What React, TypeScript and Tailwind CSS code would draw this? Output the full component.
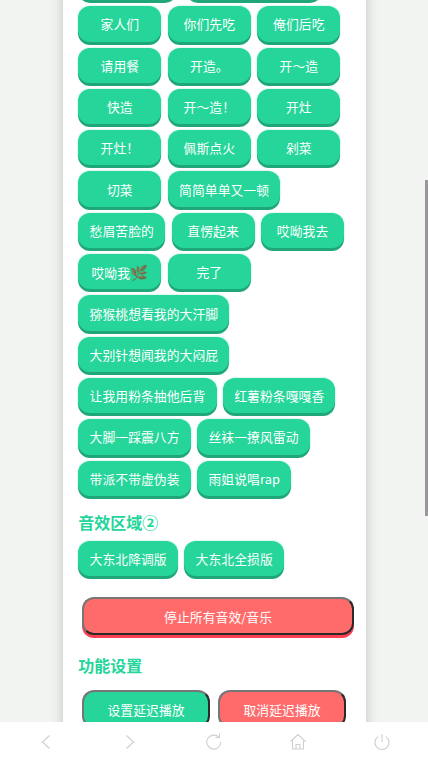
import type { ReactNode } from "react";

const font = { fontFamily: '"Noto Sans CJK SC", "Noto Sans", sans-serif' };

const soundsBefore = [
  "家人们", "你们先吃", "俺们后吃", "请用餐", "开造。", "开～造", "快造", "开～造！", "开灶", "开灶！", "佩斯点火", "剁菜",
  "切菜", "简简单单又一顿", "愁眉苦脸的", "直愣起来", "哎呦我去",
];

const soundsAfter = [
  "完了", "猕猴桃想看我的大汗脚", "大别针想闻我的大闷屁",
  "让我用粉条抽他后背", "红薯粉条嘎嘎香", "大脚一踩震八方", "丝袜一撩风雷动", "带派不带虚伪装", "雨姐说唱rap",
];

const SoundButton = ({ children }: { children: ReactNode }) => (
  <button className="h-[35.3px] min-w-[83px] mb-[6px] mx-[3.25px] px-[11.2px] rounded-[12px] bg-[#25d59a] text-white text-[12.8px] tracking-[0.07px] leading-[35px] whitespace-nowrap shadow-[0_3px_0_#1fa67b,0_0_2px_rgba(37,213,154,0.5)]">
    {children}
  </button>
);

const OutsetButton = ({ label, color, className }: { label: string; color: string; className: string }) => (
  <button
    className={`h-[38px] rounded-[12px] border-2 border-t-[#767676] border-l-[#767676] border-r-[#2a2a2a] border-b-[#2a2a2a] text-white text-[12.8px] tracking-[0.07px] ${color} ${className}`}
  >
    {label}
  </button>
);

export default function App() {
  return (
    <div style={font} className="relative h-[762px] w-[428px] overflow-hidden bg-[#f2f4f1]">
      <div className="ml-[63px] w-[303px] h-[780px] -mt-[35px] bg-white shadow-[0_0_12px_rgba(0,0,0,0.2)] pl-[12.1px] pr-[6px]">
        <div className="flex flex-wrap content-start">
          <div className="h-[35.3px] w-[99px] mb-[6px] ml-[3.25px] rounded-[12px] bg-[#25d59a] shadow-[0_3px_0_#1fa67b]" />
          <div className="h-[35.3px] w-[136.5px] mb-[6px] ml-[8.5px] mr-[20px] rounded-[12px] bg-[#25d59a] shadow-[0_3px_0_#1fa67b]" />
          {soundsBefore.map((s) => (
            <SoundButton key={s}>{s}</SoundButton>
          ))}
          <SoundButton>
            哎呦我<span className="text-[14.5px] [filter:sepia(0.7)_saturate(0.8)_brightness(0.8)]">🌿</span>
          </SoundButton>
          {soundsAfter.map((s) => (
            <SoundButton key={s}>{s}</SoundButton>
          ))}
        </div>

        <h2 className="mt-[8px] ml-[3.25px] text-[16px] leading-[24px] font-bold text-[#25d59a]">音效区域②</h2>
        <div className="mt-[7px] flex">
          <SoundButton>大东北降调版</SoundButton>
          <SoundButton>大东北全损版</SoundButton>
        </div>

        <OutsetButton
          label="停止所有音效/音乐"
          color="bg-[#ff6b6b] shadow-[0_3px_0_#ff4050]"
          className="mt-[15px] ml-[7px] block w-[272px]"
        />

        <h2 className="mt-[18px] ml-[3.25px] text-[16px] leading-[24px] font-bold text-[#25d59a]">功能设置</h2>
        <div className="mt-[13px] ml-[7px] flex gap-[8px]">
          <OutsetButton label="设置延迟播放" color="bg-[#25d59a]" className="w-[128px]" />
          <OutsetButton label="取消延迟播放" color="bg-[#ff6b6b]" className="w-[128px]" />
        </div>
      </div>

      {/* scrollbar */}
      <div className="absolute right-0 top-[180px] h-[336px] w-[3px] bg-[#9a979b]" />

      {/* bottom browser bar */}
      <div className="absolute inset-x-0 bottom-0 h-[40px] bg-white text-[#cfcfcf]">
        <svg className="absolute left-[38px] top-[10px]" width="16" height="20" viewBox="0 0 16 20" fill="none" stroke="currentColor" strokeWidth="1.2">
          <path d="M11.5 3.5 L4.5 10 L11.5 16.5" />
        </svg>
        <svg className="absolute left-[122px] top-[10px]" width="16" height="20" viewBox="0 0 16 20" fill="none" stroke="currentColor" strokeWidth="1.2">
          <path d="M4.5 3.5 L11.5 10 L4.5 16.5" />
        </svg>
        <svg className="absolute left-[205px] top-[10px]" width="18" height="20" viewBox="0 0 18 20" fill="none" stroke="currentColor" strokeWidth="1.1">
          <path d="M13.8 5.2 A7 7 0 1 0 15.8 10" />
          <path d="M10.5 5.5 H14.5 V1.5" />
        </svg>
        <svg className="absolute left-[289px] top-[10px]" width="18" height="20" viewBox="0 0 18 20" fill="none" stroke="currentColor" strokeWidth="1.1">
          <path d="M1.5 9.5 L9 2.5 L16.5 9.5" />
          <path d="M3.5 8.5 V17 H14.5 V8.5" />
          <path d="M7 17 V12.5 H11 V17" />
        </svg>
        <svg className="absolute left-[373px] top-[10px]" width="18" height="20" viewBox="0 0 18 20" fill="none" stroke="currentColor" strokeWidth="1.1">
          <path d="M5.2 4.6 A7 7 0 1 0 12.8 4.6" />
          <path d="M9 2 V10" />
        </svg>
      </div>
    </div>
  );
}
